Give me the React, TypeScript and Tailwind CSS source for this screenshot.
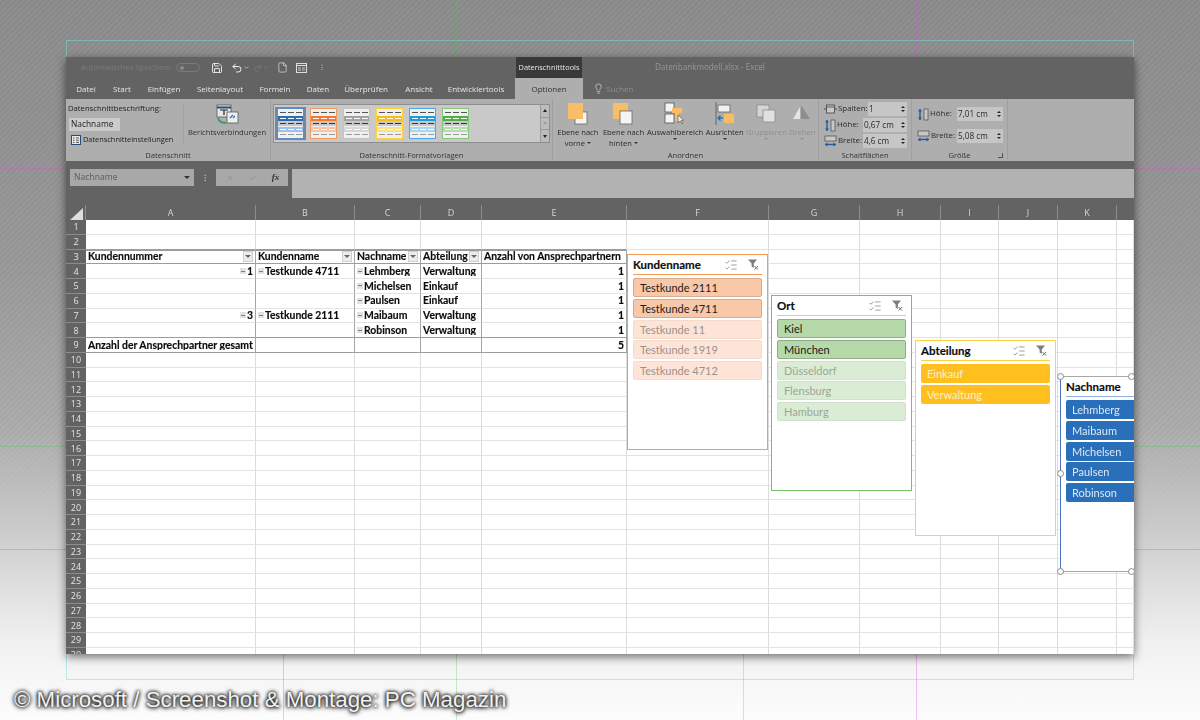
import React from "react";
import { Save, Undo2, Redo2, File, Lightbulb, X, Check, ChevronDown, ListChecks } from "lucide-react";

const COLS = ["A", "B", "C", "D", "E", "F", "G", "H", "I", "J", "K", ""];
const GRID = "grid grid-cols-[20px_170px_99px_66px_61px_145px_142px_91px_81px_58px_59px_59px_17px]";

type Cell = { t: string; exp?: boolean; right?: boolean; filter?: boolean };
const PIVOT: Record<number, Cell[]> = {
  3: [{ t: "Kundennummer", filter: true }, { t: "Kundenname", filter: true }, { t: "Nachname", filter: true }, { t: "Abteilung", filter: true }, { t: "Anzahl von Ansprechpartnern" }],
  4: [{ t: "1", exp: true, right: true }, { t: "Testkunde 4711", exp: true }, { t: "Lehmberg", exp: true }, { t: "Verwaltung" }, { t: "1", right: true }],
  5: [{ t: "" }, { t: "" }, { t: "Michelsen", exp: true }, { t: "Einkauf" }, { t: "1", right: true }],
  6: [{ t: "" }, { t: "" }, { t: "Paulsen", exp: true }, { t: "Einkauf" }, { t: "1", right: true }],
  7: [{ t: "3", exp: true, right: true }, { t: "Testkunde 2111", exp: true }, { t: "Maibaum", exp: true }, { t: "Verwaltung" }, { t: "1", right: true }],
  8: [{ t: "" }, { t: "" }, { t: "Robinson", exp: true }, { t: "Verwaltung" }, { t: "1", right: true }],
  9: [{ t: "Anzahl der Ansprechpartner gesamt" }, { t: "" }, { t: "" }, { t: "" }, { t: "5", right: true }],
};

function Exp() {
  return (
    <span className="mr-px flex h-[6px] w-[6px] shrink-0 items-center justify-center bg-[#dfe3e6]">
      <span className="h-px w-[4px] bg-[#7a8288]" />
    </span>
  );
}

function PivotCell({ c, row }: { c: Cell; row: number }) {
  return (
    <div
      className={
        "flex items-center overflow-hidden whitespace-nowrap border-r border-b border-r-[#a4a4a4] px-[2px] font-['Lato',sans-serif] text-[10.4px] font-bold leading-none text-[#0c0c0c] [-webkit-text-stroke:0.15px_#0c0c0c] " +
        (row === 3 || row === 8 || row === 9 ? "border-b-[#9c9c9c] " : "border-b-[#e3e3e3] ") +
        (row === 3 ? "shadow-[inset_0_1px_0_#9c9c9c] " : "") +
        (c.right ? "justify-end" : "justify-start")
      }
    >
      {c.exp && <Exp />}
      <span className={c.right ? "flex-none" : "flex-1 truncate"}>{c.t}</span>
      {c.filter && (
        <span className="ml-auto flex h-[11px] w-[10px] shrink-0 items-center justify-center border border-[#cfcfcf] bg-[#ececec]">
          <span className="h-0 w-0 border-x-[3px] border-t-[3px] border-x-transparent border-t-[#666]" />
        </span>
      )}
    </div>
  );
}

function Sheet() {
  const rows = Array.from({ length: 30 }, (_, i) => i + 1);
  return (
    <div className={GRID + " flex-1 auto-rows-[14.76px] overflow-hidden bg-white"}>
      {rows.map((r) => (
        <React.Fragment key={r}>
          <div className="flex items-center justify-center border-b border-b-[#8c8c8c] bg-[#636363] font-['Open_Sans',sans-serif] text-[9px] leading-none text-[#e4e4e4]">
            {r}
          </div>
          {COLS.map((_, ci) =>
            PIVOT[r] && ci < 5 ? (
              <PivotCell key={ci} c={PIVOT[r][ci]} row={r} />
            ) : (
              <div key={ci} className={"border-r border-b border-r-[#dcdcdc] " + (r === 2 && ci < 5 ? "border-b-[#9c9c9c]" : "border-b-[#e3e3e3]")} />
            )
          )}
        </React.Fragment>
      ))}
    </div>
  );
}

function ClearFilter() {
  return (
    <svg width="13" height="13" viewBox="0 0 13 13">
      <path d="M1 1.5h9L6.8 5.6V10L4.6 8.6V5.6z" fill="#7d7d7d" />
      <path d="M7.5 8l3.6 3.6M11.1 8l-3.6 3.6" stroke="#6b6b6b" strokeWidth="1" />
    </svg>
  );
}

type SlicerProps = {
  pos: string;
  title: string;
  frame: string;
  rule: string;
  sel: string;
  unsel?: string;
  items: string[];
  selected: number;
};

function Slicer({ pos, title, frame, rule, sel, unsel, items, selected }: SlicerProps) {
  return (
    <div className={"absolute z-10 flex h-[196px] w-[141px] flex-col bg-white px-[5px] " + pos + " " + frame}>
      <div className={"mb-[3px] flex h-[20px] shrink-0 items-center border-b " + rule}>
        <span className="flex-1 font-['Lato',sans-serif] text-[11.5px] font-bold leading-none text-[#0c0c0c] [-webkit-text-stroke:0.15px_#0c0c0c]">{title}</span>
        <ListChecks size={14} strokeWidth={1.2} className="mr-[9px] text-[#777]" />
        <span className="mr-[2px]"><ClearFilter /></span>
      </div>
      <div className="flex flex-col gap-[1.8px]">
        {items.map((it, i) => (
          <div
            key={it}
            className={"flex h-[19px] shrink-0 items-center rounded-[2px] pl-[6px] font-['Lato',sans-serif] text-[11px] leading-none " + (i < selected ? sel : unsel)}
          >
            {it}
          </div>
        ))}
      </div>
    </div>
  );
}

function Handle({ pos }: { pos: string }) {
  return <span className={"absolute z-20 h-[7px] w-[7px] rounded-full border border-[#8a8a8a] bg-white " + pos} />;
}

type Pal = { border: string; strong: string; soft: string; hl?: boolean };
const PALS: Pal[] = [
  { border: "border-[#5b8bc9]", strong: "bg-[#2a6db5]", soft: "bg-[#9cc0ea]", hl: true },
  { border: "border-[#f39a60]", strong: "bg-[#f37a2e]", soft: "bg-[#f8c3a0]" },
  { border: "border-[#c4c4c4]", strong: "bg-[#a3a3a3]", soft: "bg-[#d6d6d6]" },
  { border: "border-[#ffd23f]", strong: "bg-[#f9bc16]", soft: "bg-[#fde08a]" },
  { border: "border-[#4aa8e6]", strong: "bg-[#1f9be0]", soft: "bg-[#a5d7f4]" },
  { border: "border-[#86c77a]", strong: "bg-[#4fae45]", soft: "bg-[#b5dcac]" },
];

function Dashes({ tone }: { tone: string }) {
  return (
    <div className="flex h-[5px] items-center justify-center gap-[2px]">
      <span className={"h-px w-[6px] " + tone} />
      <span className={"h-px w-[6px] " + tone} />
      <span className={"h-px w-[6px] " + tone} />
    </div>
  );
}

function Swatch({ p }: { p: Pal }) {
  return (
    <div className={"flex h-[33px] w-[31px] shrink-0 items-center justify-center " + (p.hl ? "bg-[#76879b]" : "")}>
      <div className={"flex h-[31px] w-[27px] flex-col justify-between border bg-[#f0f0f0] py-[1px] " + p.border}>
        <Dashes tone="bg-[#555]" />
        <div className={p.strong}><Dashes tone="bg-white" /></div>
        <div className="bg-[#c8c8c8]"><Dashes tone="bg-[#333]" /></div>
        <div className={p.soft}><Dashes tone="bg-white" /></div>
        <Dashes tone="bg-[#999]" />
      </div>
    </div>
  );
}

function Caption({ children }: { children: React.ReactNode }) {
  return <div className="flex h-[11px] shrink-0 items-center justify-center text-[7.6px] leading-none text-[#333]">{children}</div>;
}

function BigButton({ icon, lines, disabled, w, arrowOnly }: { icon: React.ReactNode; lines: string[]; disabled?: boolean; w: string; arrowOnly?: boolean }) {
  return (
    <div className={"flex flex-col items-center pt-[3px] text-[7.6px] leading-[10.5px] " + w + " " + (disabled ? "text-[#8e8e8e]" : "text-[#2a2a2a]")}>
      <div className="flex h-[24px] items-start justify-center">{icon}</div>
      <div className="mt-[1px] whitespace-nowrap">{lines[0]}</div>
      <div className="flex items-center gap-[2px] whitespace-nowrap">
        {lines[1]}
        <span className={"h-0 w-0 border-x-[2px] border-t-[2px] border-x-transparent " + (disabled ? "border-t-[#8e8e8e]" : "border-t-[#333]") + (arrowOnly ? " mt-[5px]" : "")} />
      </div>
    </div>
  );
}

function Spin({ value, w }: { value: string; w: string }) {
  return (
    <div className={"flex h-[14px] items-center justify-between bg-[#c6c6c6] pl-[1px] pr-[2px] text-[8.2px] leading-none text-[#2a2a2a] " + w}>
      <span>{value}</span>
      <span className="flex flex-col gap-[2px]">
        <span className="h-0 w-0 border-x-[2px] border-b-[2px] border-x-transparent border-b-[#222]" />
        <span className="h-0 w-0 border-x-[2px] border-t-[2px] border-x-transparent border-t-[#222]" />
      </span>
    </div>
  );
}

function HeightIcon() {
  return (
    <svg width="12" height="13" viewBox="0 0 12 13">
      <path d="M3 1v11" stroke="#1e5d9e" strokeWidth="1.4" />
      <path d="M1 3.5L3 1l2 2.5zM1 9.5L3 12l2-2.5z" fill="#1e5d9e" />
      <rect x="7" y="1" width="4" height="11" fill="#c8c8c8" stroke="#555" strokeWidth="0.8" />
    </svg>
  );
}

function WidthIcon() {
  return (
    <svg width="13" height="12" viewBox="0 0 13 12">
      <rect x="1" y="1" width="11" height="5" fill="#c8c8c8" stroke="#555" strokeWidth="0.8" />
      <path d="M1 9.5h11" stroke="#1e5d9e" strokeWidth="1.4" />
      <path d="M3.5 7.5L1 9.5l2.5 2zM9.5 7.5L12 9.5l-2.5 2z" fill="#1e5d9e" />
    </svg>
  );
}

function ColumnsIcon() {
  return (
    <svg width="13" height="10" viewBox="0 0 13 10">
      <rect x="2.5" y="1" width="8" height="8" fill="#c8c8c8" stroke="#444" strokeWidth="0.8" />
      <path d="M2.5 3h8" stroke="#444" strokeWidth="0.8" />
      <path d="M0 5h2.5M10.5 5H13" stroke="#1e5d9e" strokeWidth="1" />
    </svg>
  );
}

function Ribbon() {
  return (
    <div className="flex h-[62px] shrink-0 bg-[#aeaeae] font-['Open_Sans',sans-serif]">
      {/* Datenschnitt */}
      <div className="flex w-[205px] shrink-0 flex-col border-r border-r-[#a0a0a0]">
        <div className="flex flex-1">
          <div className="w-[117px] shrink-0 pl-[2px] pt-[6px] text-[7.7px] leading-none text-[#222]">
            <div className="whitespace-nowrap">Datenschnittbeschriftung:</div>
            <div className="ml-px mt-[5px] flex h-[13px] w-[51px] items-center bg-[#cbcbcb] pl-[2px] text-[8.4px] text-[#222]">Nachname</div>
            <div className="mt-[4px] flex items-center gap-[2px] whitespace-nowrap pl-[3px] text-[7.4px]">
              <svg width="10" height="10" viewBox="0 0 10 10">
                <rect x="0.5" y="0.5" width="9" height="9" fill="#e8e8e8" stroke="#1f4e79" />
                <path d="M2 3h1.5M5 3h3M2 5.2h1.5M5 5.2h3M2 7.4h1.5M5 7.4h3" stroke="#333" strokeWidth="0.8" />
              </svg>
              Datenschnitteinstellungen
            </div>
          </div>
          <div className="mt-[6px] h-[38px] w-px bg-[#a2a2a2]" />
          <div className="flex flex-1 flex-col items-center pt-[5px] text-[7.6px] leading-none text-[#333]">
            <svg width="24" height="21" viewBox="0 0 24 21">
              <rect x="2" y="1" width="14" height="12" fill="#e8e8e8" stroke="#555" strokeWidth="0.8" />
              <path d="M2 3.5h14" stroke="#1f4e79" strokeWidth="2" />
              <path d="M5 6h8M9 6v5" stroke="#222" strokeWidth="1.2" />
              <rect x="12" y="8" width="11" height="11" fill="#eee" stroke="#555" strokeWidth="0.8" />
              <path d="M15 14l3-3m0 3l2-2" stroke="#1e70b8" strokeWidth="1.2" />
              <path d="M3 14c1 4 4 5 8 5" stroke="#3f9d6a" strokeWidth="2" fill="none" />
            </svg>
            <div className="mt-[4px] whitespace-nowrap">Berichtsverbindungen</div>
          </div>
        </div>
        <Caption>Datenschnitt</Caption>
      </div>
      {/* Formatvorlagen */}
      <div className="flex w-[282px] shrink-0 flex-col border-r border-r-[#a0a0a0] px-[2px]">
        <div className="flex-1 pt-[5px]">
          <div className="flex h-[39px] border border-[#8e8e8e] bg-[#c9c9c9]">
            <div className="flex flex-1 items-center gap-[2px] pl-[1px]">
              {PALS.map((p, i) => (
                <Swatch key={i} p={p} />
              ))}
            </div>
            <div className="flex w-[9px] flex-col border-l border-[#9c9c9c]">
              {[0, 1, 2].map((i) => (
                <div key={i} className="flex flex-1 items-center justify-center border-b border-[#9c9c9c] bg-[#bcbcbc] last:border-b-0">
                  <span className={"h-0 w-0 border-x-[2px] border-x-transparent " + (i === 0 ? "border-b-[3px] border-b-[#222]" : i === 1 ? "border-t-[3px] border-t-[#9a9a9a]" : "border-t-[3px] border-t-[#222]")} />
                </div>
              ))}
            </div>
          </div>
        </div>
        <Caption>Datenschnitt-Formatvorlagen</Caption>
      </div>
      {/* Anordnen */}
      <div className="flex w-[266px] shrink-0 flex-col border-r border-r-[#a0a0a0]">
        <div className="flex flex-1 justify-between pl-[2px] pr-[1px]">
          <BigButton
            w="w-[46px]"
            lines={["Ebene nach", "vorne"]}
            icon={
              <svg width="22" height="23" viewBox="0 0 22 23">
                <rect x="8" y="10" width="12" height="12" fill="#f4f4f4" stroke="#666" strokeWidth="0.8" />
                <rect x="1" y="1" width="15" height="16" fill="#f8bd66" />
              </svg>
            }
          />
          <BigButton
            w="w-[46px]"
            lines={["Ebene nach", "hinten"]}
            icon={
              <svg width="22" height="23" viewBox="0 0 22 23">
                <rect x="1" y="1" width="15" height="16" fill="#f8bd66" />
                <rect x="8" y="9" width="12" height="13" fill="#f4f4f4" stroke="#666" strokeWidth="0.8" />
              </svg>
            }
          />
          <BigButton
            w="w-[58px]"
            lines={["Auswahlbereich", " "]}
            icon={
              <svg width="22" height="23" viewBox="0 0 22 23">
                <rect x="1" y="1" width="9" height="9" fill="#f4f4f4" stroke="#555" strokeWidth="0.8" />
                <rect x="1" y="12" width="9" height="9" fill="#f4f4f4" stroke="#555" strokeWidth="0.8" />
                <path d="M8 6h10v5h-3v8h-4v-8H8z" fill="#f8bd66" />
                <path d="M14 13l0 8 2-2 2 3 1-1-2-2.500 2.500-.5z" fill="#eee" stroke="#444" strokeWidth="0.6" />
              </svg>
            }
          />
          <BigButton
            w="w-[42px]"
            lines={["Ausrichten", ""]}
            icon={
              <svg width="22" height="23" viewBox="0 0 22 23">
                <path d="M2 0v23" stroke="#666" strokeWidth="1" />
                <rect x="4" y="3" width="12" height="7" fill="#f0f0f0" stroke="#666" strokeWidth="0.8" />
                <rect x="10" y="12" width="10" height="9" fill="#f8bd66" />
                <path d="M9 16H4M6.500 13.500L4 16l2.500 2.500" stroke="#1e70b8" strokeWidth="1.3" fill="none" />
              </svg>
            }
          />
          <BigButton
            w="w-[42px]"
            disabled
            lines={["Gruppieren", ""]}
            icon={
              <svg width="22" height="23" viewBox="0 0 22 23">
                <rect x="2" y="3" width="12" height="12" fill="#d4d4d4" stroke="#8c8c8c" strokeWidth="0.8" />
                <rect x="8" y="8" width="12" height="12" fill="#e0e0e0" stroke="#8c8c8c" strokeWidth="0.8" />
              </svg>
            }
          />
          <BigButton
            w="w-[30px]"
            disabled
            lines={["Drehen", ""]}
            icon={
              <svg width="22" height="21" viewBox="0 0 22 21">
                <path d="M2 17L9 5v12z" fill="#e4e4e4" />
                <path d="M10 17V3l9 14z" fill="#8e8e8e" />
              </svg>
            }
          />
        </div>
        <Caption>Anordnen</Caption>
      </div>
      {/* Schaltflächen */}
      <div className="flex w-[93px] shrink-0 flex-col border-r border-r-[#a0a0a0] text-[7.900px] leading-none text-[#2a2a2a]">
        <div className="flex flex-1 flex-col gap-[2px] pl-[5px] pr-[4px] pt-[3px]">
          <div className="flex items-center justify-between">
            <span className="flex items-center gap-[1px]"><ColumnsIcon />Spalten:</span>
            <Spin value="1" w="w-[39px]" />
          </div>
          <div className="flex items-center justify-between">
            <span className="flex items-center gap-[1px]"><HeightIcon />Höhe:</span>
            <Spin value="0,67 cm" w="w-[44px]" />
          </div>
          <div className="flex items-center justify-between">
            <span className="flex items-center gap-[1px]"><WidthIcon />Breite:</span>
            <Spin value="4,6 cm" w="w-[44px]" />
          </div>
        </div>
        <Caption>Schaltflächen</Caption>
      </div>
      {/* Größe */}
      <div className="flex w-[96px] shrink-0 flex-col border-r border-r-[#a0a0a0] text-[7.900px] leading-none text-[#2a2a2a]">
        <div className="flex flex-1 flex-col gap-[8px] pl-[5px] pr-[4px] pt-[8px]">
          <div className="flex items-center justify-between">
            <span className="flex items-center gap-[1px]"><HeightIcon />Höhe:</span>
            <Spin value="7,01 cm" w="w-[46px]" />
          </div>
          <div className="flex items-center justify-between">
            <span className="flex items-center gap-[1px]"><WidthIcon />Breite:</span>
            <Spin value="5,08 cm" w="w-[46px]" />
          </div>
        </div>
        <div className="relative">
          <Caption>Größe</Caption>
          <span className="absolute right-[4px] top-[3px] h-[5px] w-[5px] border-b border-r border-[#555]" />
        </div>
      </div>
    </div>
  );
}

const TABS: [string, string][] = [
  ["Datei", "w-[40px]"],
  ["Start", "w-[32px]"],
  ["Einfügen", "w-[52px]"],
  ["Seitenlayout", "w-[60px]"],
  ["Formeln", "w-[50px]"],
  ["Daten", "w-[36px]"],
  ["Überprüfen", "w-[60px]"],
  ["Ansicht", "w-[46px]"],
  ["Entwicklertools", "w-[68px]"],
];

export default function App() {
  return (
    <div className="relative h-[720px] w-[1200px] overflow-hidden bg-[linear-gradient(180deg,#8a8a8a_0,#979797_260px,#a9a9a9_420px,#cfcfcf_540px,#f0f0f0_640px,#fdfdfd_720px)] pl-[66px] pt-[57px]">
      {/* stripes */}
      <div className="absolute inset-0 bg-[repeating-linear-gradient(135deg,rgba(255,255,255,0.035)_0,rgba(255,255,255,0.035)_2px,rgba(0,0,0,0.012)_2px,rgba(0,0,0,0.012)_4px)] [mask-image:linear-gradient(180deg,#000_0,#000_420px,transparent_580px)]" />
      {/* guide lines */}
      <div className="absolute left-[66px] top-[40px] h-[640px] w-[1068px] border border-[#6fe0dc]/50" />
      <div className="absolute left-[283px] top-0 h-full w-px bg-[#e24ae2]/35" />
      <div className="absolute left-[916px] top-0 h-full w-px bg-[#e24ae2]/35" />
      <div className="absolute left-[456px] top-0 h-full w-px bg-[#3fc93f]/30" />
      <div className="absolute left-[743px] top-0 h-full w-px bg-[#3fc93f]/30" />
      <div className="absolute left-0 top-[168px] h-px w-full bg-[#e24ae2]/35" />
      <div className="absolute left-0 top-[273px] h-px w-full bg-[#3fc93f]/30" />
      <div className="absolute left-0 top-[446px] h-px w-full bg-[#3fc93f]/30" />
      <div className="absolute left-0 top-[549px] h-px w-full bg-[#e24ae2]/35" />

      {/* window */}
      <div className="relative z-10 flex h-[597px] w-[1068px] flex-col overflow-hidden bg-[#636363] font-['Open_Sans',sans-serif] shadow-[0_3px_9px_rgba(0,0,0,0.55)] blur-[0.4px]">
        {/* title */}
        <div className="flex h-[21px] shrink-0 items-center text-[7.6px] leading-none">
          <span className="ml-[15px] w-[95px] shrink-0 whitespace-nowrap text-[#7b7b7b]">Automatisches Speichern</span>
          <span className="flex h-[9px] w-[24px] shrink-0 items-center rounded-full border border-[#7b7b7b] pl-[3px]">
            <span className="h-[4px] w-[4px] rounded-full bg-[#8a8a8a]" />
          </span>
          <Save size={12} strokeWidth={1.8} className="ml-[11px] text-[#f0f0f0]" />
          <Undo2 size={12} strokeWidth={2} className="ml-[8px] text-[#f0f0f0]" />
          <ChevronDown size={7} className="text-[#ddd]" />
          <Redo2 size={10} strokeWidth={1.6} className="ml-[3px] text-[#7d7d7d]" />
          <ChevronDown size={7} className="text-[#7d7d7d]" />
          <File size={11} strokeWidth={1.4} className="ml-[7px] text-[#e8e8e8]" />
          <svg width="11" height="10" viewBox="0 0 11 10" className="ml-[8px]">
            <rect x="0.500" y="0.500" width="10" height="9" fill="none" stroke="#ddd" />
            <path d="M1 2.500h9" stroke="#ddd" />
            <path d="M2 5h3M2 7h3M6 5h3M6 7h3" stroke="#ddd" strokeWidth="0.8" />
          </svg>
          <span className="ml-[14px] text-[#ddd]">⁝</span>
          <span className="ml-[193px] flex h-[21px] w-[66px] shrink-0 items-center justify-center bg-[#393939] text-[7.4px] text-[#e8e8e8]">Datenschnitttools</span>
          <span className="ml-[73px] whitespace-nowrap text-[8.100px] text-[#989898]">Datenbankmodell.xlsx - Excel</span>
        </div>
        {/* tabs */}
        <div className="flex h-[21px] shrink-0 items-center text-[8px] leading-none text-[#e6e6e6]">
          {TABS.map(([t, w]) => (
            <span key={t} className={"flex shrink-0 justify-center whitespace-nowrap " + w}>{t}</span>
          ))}
          <span className="ml-[5px] flex h-full w-[68px] shrink-0 items-center justify-center bg-[#aeaeae] text-[#333]">Optionen</span>
          <Lightbulb size={11} strokeWidth={1.4} className="ml-[10px] text-[#e8e8e8]" />
          <span className="ml-[2px] text-[#8c8c8c]">Suchen</span>
        </div>
        <Ribbon />
        {/* formula bar */}
        <div className="mt-[8px] flex h-[29px] shrink-0 items-start pl-[4px]">
          <div className="flex h-[17px] w-[124px] shrink-0 items-center justify-between bg-[#a8a8a8] pl-[4px] pr-[4px] text-[8.600px] leading-none text-[#5d5d5d]">
            Nachname
            <span className="h-0 w-0 border-x-[3px] border-t-[3px] border-x-transparent border-t-[#333]" />
          </div>
          <span className="flex h-[17px] w-[22px] shrink-0 items-center justify-center text-[9px] leading-none text-[#ddd]">⁝</span>
          <div className="flex h-[17px] w-[72px] shrink-0 items-center justify-around bg-[#a8a8a8] px-[2px] text-[#888]">
            <X size={10} strokeWidth={1.5} />
            <Check size={10} strokeWidth={1.5} />
            <span className="font-['Liberation_Serif',serif] text-[9px] font-bold italic leading-none text-[#333]">fx</span>
          </div>
          <div className="ml-[4px] h-[29px] flex-1 bg-[#b2b2b2]" />
        </div>
        {/* column headers */}
        <div className={GRID + " mt-[7px] h-[15px] shrink-0 bg-[#636363]"}>
          <div className="flex items-end justify-end border-r border-r-[#8c8c8c] pr-[2px]">
            <svg width="13" height="12" viewBox="0 0 13 12"><path d="M13 0v12H0z" fill="#dedede" /></svg>
          </div>
          {COLS.map((c, i) => (
            <div key={i} className="flex items-center justify-center border-r border-r-[#8c8c8c] text-[9px] leading-none text-[#d6d6d6] last:border-r-0">
              {c}
            </div>
          ))}
        </div>
        <Sheet />

        {/* slicers */}
        <Slicer
          pos="left-[561px] top-[197px]"
          frame="border border-[#f79a52]"
          rule="border-b-[#f79a52]"
          title="Kundenname"
          sel="border border-[#d8ab8e] bg-[#f9c8a8] text-[#222]"
          unsel="border border-[#f2dcce] bg-[#fde4d7] text-[#9c928c]"
          items={["Testkunde 2111", "Testkunde 4711", "Testkunde 11", "Testkunde 1919", "Testkunde 4712"]}
          selected={2}
        />
        <Slicer
          pos="left-[705px] top-[238px]"
          frame="border border-[#72c462]"
          rule="border-b-[#b9d8b2]"
          title="Ort"
          sel="border border-[#90ad8a] bg-[#b6d9aa] text-[#1a1a1a]"
          unsel="border border-[#d0e0cb] bg-[#dbecd5] text-[#9aa797]"
          items={["Kiel", "München", "Düsseldorf", "Flensburg", "Hamburg"]}
          selected={2}
        />
        <Slicer
          pos="left-[849px] top-[283px]"
          frame="border border-[#ffd23f]"
          rule="border-b-[#ffd23f]"
          title="Abteilung"
          sel="bg-[#ffbf1f] text-[#fdf0c8]"
          items={["Einkauf", "Verwaltung"]}
          selected={2}
        />
        <Slicer
          pos="left-[994px] top-[319px]"
          frame="border border-[#a8a8a8] border-l-[#4a70c4]"
          rule="border-b-[#8fb0e0]"
          title="Nachname"
          sel="bg-[#2a6fb9] text-[#dbe8f6]"
          items={["Lehmberg", "Maibaum", "Michelsen", "Paulsen", "Robinson"]}
          selected={5}
        />
        <Handle pos="left-[991px] top-[316px]" />
        <Handle pos="left-[991px] top-[413px]" />
        <Handle pos="left-[991px] top-[511px]" />
        <Handle pos="left-[1062px] top-[316px]" />
        <Handle pos="left-[1062px] top-[511px]" />
      </div>

      {/* credit */}
      <div className="relative z-10 -ml-[52px] mt-[35px] whitespace-nowrap font-['Liberation_Sans',sans-serif] text-[22.300px] leading-none text-[#f2f2f2] [text-shadow:0_0_3px_#111,0_0_4px_#222,0_1px_5px_#333]">
        © Microsoft / Screenshot &amp; Montage: PC Magazin
      </div>
    </div>
  );
}
